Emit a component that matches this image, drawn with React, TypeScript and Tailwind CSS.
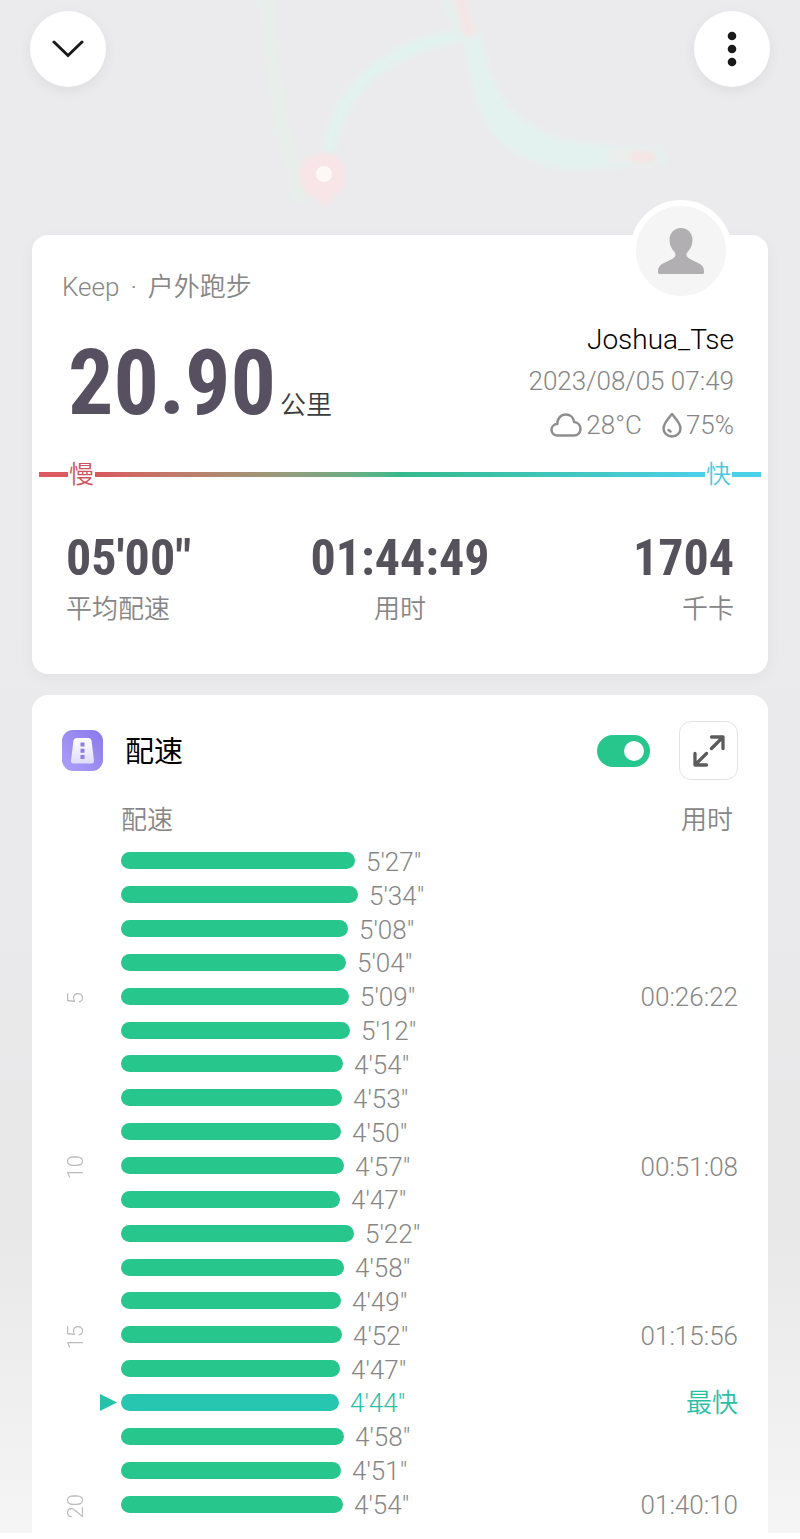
import React from "react";

const splits = [
  { pace: `5'27"`, width: 234 },
  { pace: `5'34"`, width: 237 },
  { pace: `5'08"`, width: 227 },
  { pace: `5'04"`, width: 225 },
  { pace: `5'09"`, width: 228, time: "00:26:22" },
  { pace: `5'12"`, width: 229 },
  { pace: `4'54"`, width: 222 },
  { pace: `4'53"`, width: 221 },
  { pace: `4'50"`, width: 220 },
  { pace: `4'57"`, width: 223, time: "00:51:08" },
  { pace: `4'47"`, width: 219 },
  { pace: `5'22"`, width: 233 },
  { pace: `4'58"`, width: 223 },
  { pace: `4'49"`, width: 220 },
  { pace: `4'52"`, width: 221, time: "01:15:56" },
  { pace: `4'47"`, width: 219 },
  { pace: `4'44"`, width: 218, fastest: true },
  { pace: `4'58"`, width: 223 },
  { pace: `4'51"`, width: 220 },
  { pace: `4'54"`, width: 222, time: "01:40:10" },
];

const stats = [
  { value: `05'00"`, label: "平均配速", align: "text-left" },
  { value: "01:44:49", label: "用时", align: "text-center" },
  { value: "1704", label: "千卡", align: "text-right" },
];

function RouteMap() {
  return (
    <svg className="absolute left-1/2 top-0 -translate-x-1/2" width="800" height="235" viewBox="0 0 800 235" fill="none" aria-hidden="true">
      <defs>
        <filter id="soft" x="-10%" y="-10%" width="120%" height="120%">
          <feGaussianBlur stdDeviation="2" />
        </filter>
      </defs>
      <g filter="url(#soft)" strokeLinecap="round">
        <path d="M267 -8C269 50 274 95 286 140C291 158 294 180 300 198" stroke="#e8eeea" strokeWidth="13" />
        <path d="M329 146C342 92 380 48 458 36" stroke="#e2f2ee" strokeWidth="13" />
        <path d="M451 -4L466 32" stroke="#e5f0ed" strokeWidth="20" />
        <path
          d="M462 36L480 34C486 62 494 91 512 110C530 130 562 143 606 145L660 150L656 164L606 168C560 173 518 164 496 136C475 112 470 72 462 36Z"
          fill="#e4f2ef"
        />
        <path d="M458 -6L469 32" stroke="#f4e6e6" strokeWidth="11" />
        <path d="M614 156H634" stroke="#ebeeec" strokeWidth="14" />
        <path d="M636 157H650" stroke="#f5e5e4" strokeWidth="12" />
        <path d="M660 150L663 160" stroke="#e4f0ed" strokeWidth="7" />
        <circle cx="323" cy="176" r="23" fill="#f8e5e7" />
        <path d="M309 192H337L324 207Z" fill="#f8e5e7" />
      </g>
      <circle cx="324" cy="174" r="8" fill="#fdf8f6" />
    </svg>
  );
}

function SummaryCard() {
  return (
    <section className="relative mx-8 rounded-2xl bg-white pb-[47px] pt-[34px] shadow-[0_4px_16px_rgba(0,0,0,0.04)]">
      <div className="absolute -top-[35px] right-9 flex size-[102px] items-center justify-center rounded-full border-[6px] border-white bg-[#f5f5f5]">
        <svg width="48" height="48" viewBox="0 0 48 48" fill="#b1afb1" aria-hidden="true">
          <path d="M24 1C17 1 12.500 6 12.500 13C12.500 18 14.500 22 17.500 25C19.500 28 18.500 30 15 32L6 36.500C2.500 38.500 1 40.500 1 44V45.500Q1 47 2.500 47H45.500Q47 47 47 45.500V44C47 40.500 45.500 38.500 42 36.500L33 32C29.500 30 28.500 28 30.500 25C33.500 22 35.500 18 35.500 13C35.500 6 31 1 24 1Z" />
        </svg>
      </div>

      <h1 className="flex gap-[11px] pl-[30px] text-[26px] font-[350] leading-9 text-[#868686]">
        <span>Keep</span>
        <span>·</span>
        <span>户外跑步</span>
      </h1>

      <div className="flex items-start justify-between pl-9 pr-[34px] pt-[14px]">
        <p className="flex items-baseline gap-1 pt-[15px]">
          <span className="font-['Roboto_Condensed','Roboto',sans-serif] text-[90px] font-bold leading-[100px] text-[#575060]">20.90</span>
          <span className="text-[26px] font-[350] text-[#3c3c3c]">公里</span>
        </p>
        <div className="text-right text-[26px] font-[350] text-[#868686]">
          <p className="text-[28px] leading-[42px] text-black">Joshua_Tse</p>
          <p className="leading-10">2023/08/05 07:49</p>
          <p className="flex items-center justify-end gap-1 leading-[48px]">
            <svg width="32" height="24" viewBox="0 0 32 24" fill="none" stroke="#8e8e8e" strokeWidth="2.500" strokeLinejoin="round" aria-hidden="true">
              <path d="M7.500 22.500C4 22.500 1.500 20 1.500 16.800C1.500 13.600 4 11.200 7.300 11.100C7.300 5.500 10.800 1.500 15.800 1.500C20.300 1.500 23.600 4.600 24.200 9C28 9.500 30.500 12.300 30.500 15.800C30.500 19.700 27.600 22.500 24 22.500Z" />
            </svg>
            <span>28°C</span>
            <svg className="ml-4" width="20" height="26" viewBox="0 0 20 26" fill="none" stroke="#8e8e8e" strokeWidth="2.500" strokeLinejoin="round" strokeLinecap="round" aria-hidden="true">
              <path d="M10 2C6.500 6.500 1.500 11.500 1.500 16.300C1.500 21 5.200 24.500 10 24.500C14.800 24.500 18.500 21 18.500 16.300C18.500 11.500 13.500 6.500 10 2Z" />
              <path d="M6.500 18L8.500 19.500" />
            </svg>
            <span>75%</span>
          </p>
        </div>
      </div>

      {/* 配速色带 */}
      <div className="mx-[7px] mt-[6px] flex items-center gap-px text-[25px] leading-9">
        <div className="h-[5px] w-[29px] bg-[#dc5a60]" />
        <span className="pt-0.5 font-[350] text-[#d0565b]">慢</span>
        <div className="h-[5px] flex-1 bg-linear-to-r from-[#d8595e] via-[#35b98c] to-[#4cd0e8]" />
        <span className="pt-0.5 font-[350] text-[#4cc9df]">快</span>
        <div className="h-[5px] w-[29px] bg-[#4cd0e8]" />
      </div>

      <dl className="grid grid-cols-3 px-[34px] pt-[37px]">
        {stats.map((s) => (
          <div key={s.label} className={`flex flex-col-reverse ${s.align}`}>
            <dt className="pt-[5px] text-[26px] font-[350] leading-9 text-[#868686]">{s.label}</dt>
            <dd className="font-['Roboto_Condensed','Roboto',sans-serif] text-[50px] font-bold leading-[56px] text-[#55525b]">{s.value}</dd>
          </div>
        ))}
      </dl>
    </section>
  );
}

function PaceCard() {
  return (
    <section className="mx-8 mt-[21px] rounded-t-2xl bg-white px-[30px] pb-3 pt-[26px]">
      <div className="flex items-center">
        <svg width="41" height="41" viewBox="0 0 41 41" aria-hidden="true">
          <defs>
            <linearGradient id="badge" x1="0" y1="1" x2="1" y2="0">
              <stop offset="0" stopColor="#ad9ffb" />
              <stop offset="1" stopColor="#8a79ea" />
            </linearGradient>
            <linearGradient id="road" x1="0" y1="0" x2="0" y2="1">
              <stop offset="0" stopColor="#fff" />
              <stop offset="1" stopColor="#e0dcfb" />
            </linearGradient>
          </defs>
          <rect width="41" height="41" rx="11" fill="url(#badge)" />
          <path d="M14.500 8H26.500Q29 8 29.500 10.500L32 30.500Q32.200 33.500 29.500 33.500H11.500Q8.800 33.500 9 30.500L11.500 10.500Q12 8 14.500 8Z" fill="url(#road)" />
          <path d="M18.500 12.500h4v4h-4zM18.500 18.700h4v4h-4zM18.500 25h4v4h-4z" fill="#8d7fdd" />
        </svg>
        <h2 className="ml-[22px] flex-1 pt-0.5 text-[29px] leading-10 text-black">配速</h2>
        <input
          type="checkbox"
          role="switch"
          aria-label="显示配速"
          defaultChecked
          className="h-8 w-[53px] cursor-pointer appearance-none rounded-full bg-gray-300 p-[6px] before:block before:size-5 before:rounded-full before:bg-white before:content-[''] checked:bg-[#27c68c] checked:before:ml-[21px]"
        />
        <button aria-label="全屏" className="ml-[29px] flex size-[59px] items-center justify-center rounded-xl border border-[#e2e2e2]">
          <svg width="32" height="32" viewBox="0 0 32 32" fill="none" stroke="#5c5c5c" strokeWidth="3.300" strokeLinecap="round" strokeLinejoin="round" aria-hidden="true">
            <path d="M18.500 13.500L29.500 2.500M18.500 2H30V13.500M13.500 18.500L2.500 29.500M2 18.500V30H13.500" />
          </svg>
        </button>
      </div>

      <table className="mt-[14px] h-[727px] w-full text-[26px] font-[350] leading-7 text-[#868686]">
        <thead>
          <tr className="h-[50px]">
            <th className="w-[59px]" aria-label="公里" />
            <th className="pt-0.5 text-left font-[350]">配速</th>
            <th className="pr-[5px] pt-0.5 text-right font-[350]">用时</th>
          </tr>
        </thead>
        <tbody>
          {splits.map((s, i) => (
            <tr key={i} className={s.fastest ? "text-[#2cbfa8]" : ""}>
              <td className="p-0">
                {(i + 1) % 5 === 0 && (
                  <span className="mt-1 block w-[27px] rotate-180 text-center text-[22px] leading-[27px] text-[#bcbcbc] [writing-mode:vertical-rl]">{i + 1}</span>
                )}
                {s.fastest && (
                  <svg className="ml-auto mr-1" width="17" height="17" viewBox="0 0 17 17" fill="#26c2ac" aria-hidden="true">
                    <path d="M0 0L17 8.500L0 17Z" />
                  </svg>
                )}
              </td>
              <td className="p-0">
                <div className="flex items-center gap-[11px]">
                  <div className={`h-[17px] rounded-full ${s.fastest ? "bg-[#26c6b0]" : "bg-[#27c68c]"}`} style={{ width: s.width }} />
                  <span className="pt-0.5">{s.pace}</span>
                </div>
              </td>
              <td className="p-0 pt-0.5 text-right">{s.fastest ? "最快" : s.time}</td>
            </tr>
          ))}
        </tbody>
      </table>
    </section>
  );
}

export default function App() {
  return (
    <div lang="zh-CN" className="min-h-screen bg-white font-['Roboto','Noto_Sans_CJK_SC',sans-serif]">
      <main className="bg-linear-to-b from-[#ebebed] from-40% via-[#e8e8e9] via-80% to-[#f5f5f5]">
        <header className="relative flex h-[235px] items-start justify-between overflow-hidden px-[30px] pt-[11px]">
          <RouteMap />
          <button aria-label="收起" className="relative flex size-[76px] items-center justify-center rounded-full bg-white shadow-[0_4px_14px_rgba(0,0,0,0.06)]">
            <svg width="32" height="20" viewBox="0 0 32 20" fill="none" stroke="#1a1a1a" strokeWidth="3" strokeLinecap="round" aria-hidden="true">
              <path d="M2 3L16 16.500L30 3" />
            </svg>
          </button>
          <button aria-label="更多" className="relative flex size-[76px] items-center justify-center rounded-full bg-white shadow-[0_4px_14px_rgba(0,0,0,0.06)]">
            <svg width="10" height="36" viewBox="0 0 10 36" fill="#1a1a1a" aria-hidden="true">
              <circle cx="5" cy="5" r="4.300" />
              <circle cx="5" cy="18" r="4.300" />
              <circle cx="5" cy="31" r="4.300" />
            </svg>
          </button>
        </header>
        <SummaryCard />
        <PaceCard />
      </main>
    </div>
  );
}
